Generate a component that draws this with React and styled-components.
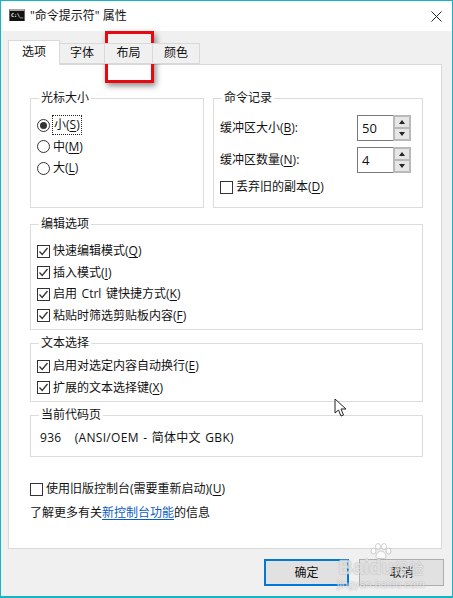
import React from 'react'
import styled, { createGlobalStyle } from 'styled-components'

const GlobalStyle = createGlobalStyle`
  html, body {
    margin: 0;
    padding: 0;
    background: #f0f0f0;
  }
  * {
    box-sizing: border-box;
  }
`

const Window = styled.div`
  position: relative;
  width: 453px;
  height: 598px;
  display: flex;
  flex-direction: column;
  overflow: hidden;
  border: 1px solid #17b5c4;
  border-bottom-width: 2px;
  background: #f0f0f0;
  color: #111;
  font-family: 'Open Sans', 'Noto Sans CJK SC', sans-serif;
  font-size: 12px;
  line-height: 16px;
`

const TitleBar = styled.div`
  flex: none;
  height: 30px;
  display: flex;
  align-items: center;
  padding: 0 10px 0 8px;
  background: #fff;
`

const TitleText = styled.span`
  flex: 1;
  margin-left: 5px;
`

const ConsoleIcon = styled.div`
  width: 16px;
  height: 12px;
  margin-bottom: 2px;
  padding-left: 1px;
  background: #111;
  border-top: 2px solid #a8a8a8;
  border-left: 1px solid #666;
  border-right: 1px solid #666;
  color: #fff;
  font-family: 'DejaVu Sans Mono', monospace;
  font-weight: 700;
  font-size: 5px;
  line-height: 9px;
  white-space: pre;
`

const Body = styled.div`
  flex: 1;
  display: flex;
  flex-direction: column;
  padding: 9px 10px 9px 7px;
`

const Tabs = styled.div`
  flex: none;
  height: 24px;
  display: flex;
  align-items: flex-end;
  position: relative;
  z-index: 1;
`

const Tab = styled.div`
  width: ${({ $w }) => $w}px;
  height: ${({ $active }) => ($active ? 25 : 21)}px;
  margin-bottom: ${({ $active }) => ($active ? -1 : 0)}px;
  padding-bottom: ${({ $active }) => ($active ? 3 : 1)}px;
  display: flex;
  align-items: center;
  justify-content: center;
  border: 1px solid #d9d9d9;
  border-left-width: ${({ $active, $first }) => ($active || $first ? 1 : 0)}px;
  border-bottom: ${({ $active }) => ($active ? 'none' : '1px solid #d9d9d9')};
  background: ${({ $active }) => ($active ? '#fff' : '#f0f0f0')};
`

const Panel = styled.div`
  flex: none;
  height: 485px;
  display: flex;
  flex-direction: column;
  padding: 33px 18px 0 21px;
  background: #fff;
  border: 1px solid #d9d9d9;
`

const TopRow = styled.div`
  display: flex;
  gap: 9px;
`

const Group = styled.div`
  flex: ${({ $w }) => ($w ? `0 0 ${$w}px` : 'none')};
  height: ${({ $h }) => $h}px;
  margin-top: ${({ $mt }) => $mt || 0}px;
  padding-left: 6px;
  border: 1px solid #dcdcdc;
`

const Legend = styled.div`
  width: fit-content;
  height: 16px;
  margin: -9px 0 0 2px;
  padding: 0 2px;
  background: #fff;
`

const Rows = styled.div`
  display: flex;
  flex-direction: column;
  gap: ${({ $gap }) => $gap}px;
  margin-top: ${({ $mt }) => $mt}px;
`

const Row = styled.div`
  height: 16px;
  margin-top: ${({ $mt }) => $mt || 0}px;
  display: flex;
  align-items: center;
  white-space: pre;
`

const Radio = styled.span`
  flex: none;
  width: 13px;
  height: 13px;
  margin-right: 3px;
  display: flex;
  align-items: center;
  justify-content: center;
  border: 1px solid #333;
  border-radius: 50%;

  &::after {
    content: '';
    width: 7px;
    height: 7px;
    border-radius: 50%;
    background: ${({ $on }) => ($on ? '#333' : 'transparent')};
  }
`

const Box = styled.span`
  flex: none;
  width: 13px;
  height: 13px;
  margin-right: 3px;
  display: flex;
  border: 1px solid #333;
  background: #fff;
`

const Focus = styled.span`
  padding: 1px;
  outline: 1px dotted #222;
  line-height: 16px;
`

const Key = styled.span`
  text-decoration: underline;
  text-underline-offset: 2px;
`

const Wide = styled.span`
  word-spacing: 1.5px;
`

const SpinRow = styled.div`
  height: 26px;
  display: flex;
  align-items: center;
  justify-content: space-between;
  padding-right: 11px;
`

const Spin = styled.div`
  width: 54px;
  height: 26px;
  display: flex;
`

const SpinInput = styled.div`
  flex: 1;
  padding: 0 4px;
  display: flex;
  align-items: center;
  font-size: 13px;
  border: 1px solid #7a7a7a;
  border-right: none;
`

const SpinButtons = styled.div`
  width: 18px;
  display: flex;
  flex-direction: column;
  gap: 2px;
  padding: 2px;
  background: #b9b9b9;
`

const SpinButton = styled.div`
  flex: 1;
  display: flex;
  align-items: center;
  justify-content: center;
  background: #e6e6e6;

  &::after {
    content: '';
    border-left: 3.5px solid transparent;
    border-right: 3.5px solid transparent;
    ${({ $up }) => ($up ? 'border-bottom' : 'border-top')}: 4px solid #222;
  }
`

const CodePage = styled.div`
  margin: 7px 0 0 3px;
  letter-spacing: 0.3px;
  word-spacing: 1px;
  white-space: pre;
`

const LegacyRow = styled.div`
  height: 16px;
  margin-top: 24px;
  display: flex;
  align-items: center;
`

const InfoLine = styled.div`
  margin-top: 8px;
`

const Link = styled.span`
  color: #0a5bc4;
  text-decoration: underline;
  text-underline-offset: 2px;
`

const Footer = styled.div`
  flex: 1;
  display: flex;
  justify-content: flex-end;
  gap: 10px;
  margin-right: -2px;
  padding-top: 10px;
`

const Button = styled.div`
  width: 85px;
  height: 27px;
  display: flex;
  align-items: center;
  justify-content: center;
  background: #e1e1e1;
  border: ${({ $primary }) => ($primary ? '2px solid #0078d7' : '1px solid #adadad')};
`

const Highlight = styled.div`
  position: absolute;
  left: 104px;
  top: 30px;
  width: 49px;
  height: 52px;
  border: 3px solid #e8080f;
  box-shadow: 2px 3px 6px rgba(0, 0, 0, 0.45);
`

const Cursor = styled.svg`
  position: absolute;
  left: 333px;
  top: 397px;
`

const Watermark = styled.div`
  position: absolute;
  left: 335px;
  top: 542px;
  width: 90px;
  display: flex;
  flex-direction: column;
  align-items: center;
  color: rgba(255, 255, 255, 0.5);
  text-shadow:
    1px 0 0 rgba(175, 175, 175, 0.3),
    -1px 0 0 rgba(175, 175, 175, 0.3),
    0 1px 0 rgba(175, 175, 175, 0.3),
    0 -1px 0 rgba(175, 175, 175, 0.3);
  font-family: 'Liberation Sans', 'Noto Sans CJK SC', sans-serif;
  pointer-events: none;
`

const WatermarkMain = styled.div`
  display: flex;
  align-items: baseline;
  margin-top: -2px;
  font-size: 20px;
  font-weight: 700;
  line-height: 19px;
`

const WatermarkCjk = styled.span`
  font-size: 15px;
  font-weight: 400;
`

const WatermarkSub = styled.span`
  font-size: 10.5px;
  line-height: 12px;
  letter-spacing: 0.2px;
`

const Check = () => (
  <svg width="11" height="11" viewBox="0 0 11 11">
    <path d="M1.5 5.5 L4.2 8.5 L9.5 2" fill="none" stroke="#333" strokeWidth="1.3" />
  </svg>
)

const CheckRow = ({ children }) => (
  <Row>
    <Box>
      <Check />
    </Box>
    {children}
  </Row>
)

const Spinner = ({ value }) => (
  <Spin>
    <SpinInput>{value}</SpinInput>
    <SpinButtons>
      <SpinButton $up />
      <SpinButton />
    </SpinButtons>
  </Spin>
)

const App = () => {
  return (
    <>
      <GlobalStyle />
      <Window>
        <TitleBar>
          <ConsoleIcon>{'C:\\_'}</ConsoleIcon>
          <TitleText>"命令提示符" 属性</TitleText>
          <svg width="11" height="11" viewBox="0 0 11 11">
            <path d="M0.5 0.5 L10.5 10.5 M10.5 0.5 L0.5 10.5" stroke="#222" strokeWidth="1" fill="none" />
          </svg>
        </TitleBar>
        <Body>
          <Tabs>
            <Tab $w={52} $active $first>选项</Tab>
            <Tab $w={45}>字体</Tab>
            <Tab $w={48}>布局</Tab>
            <Tab $w={47}>颜色</Tab>
          </Tabs>
          <Panel>
            <TopRow>
              <Group $w={174} $h={110}>
                <Legend>光标大小</Legend>
                <Rows $gap={5.5} $mt={11}>
                  <Row>
                    <Radio $on />
                    <Focus>小(<Key>S</Key>)</Focus>
                  </Row>
                  <Row>
                    <Radio />
                    中(<Key>M</Key>)
                  </Row>
                  <Row>
                    <Radio />
                    大(<Key>L</Key>)
                  </Row>
                </Rows>
              </Group>
              <Group $w={210} $h={110}>
                <Legend>命令记录</Legend>
                <Rows $gap={6} $mt={9}>
                  <SpinRow>
                    <span>缓冲区大小(<Key>B</Key>):</span>
                    <Spinner value="50" />
                  </SpinRow>
                  <SpinRow>
                    <span>缓冲区数量(<Key>N</Key>):</span>
                    <Spinner value="4" />
                  </SpinRow>
                </Rows>
                <Row $mt={6}>
                  <Box />
                  丢弃旧的副本(<Key>D</Key>)
                </Row>
              </Group>
            </TopRow>
            <Group $h={106} $mt={16}>
              <Legend>编辑选项</Legend>
              <Rows $gap={5.5} $mt={11}>
                <CheckRow>快速编辑模式(<Key>Q</Key>)</CheckRow>
                <CheckRow>插入模式(<Key>I</Key>)</CheckRow>
                <CheckRow><Wide>启用 Ctrl 键快捷方式</Wide>(<Key>K</Key>)</CheckRow>
                <CheckRow>粘贴时筛选剪贴板内容(<Key>F</Key>)</CheckRow>
              </Rows>
            </Group>
            <Group $h={59} $mt={13}>
              <Legend>文本选择</Legend>
              <Rows $gap={5.5} $mt={7}>
                <CheckRow>启用对选定内容自动换行(<Key>E</Key>)</CheckRow>
                <CheckRow>扩展的文本选择键(<Key>X</Key>)</CheckRow>
              </Rows>
            </Group>
            <Group $h={42} $mt={13}>
              <Legend>当前代码页</Legend>
              <CodePage>936   (ANSI/OEM - 简体中文 GBK)</CodePage>
            </Group>
            <LegacyRow>
              <Box />
              使用旧版控制台(需要重新启动)(<Key>U</Key>)
            </LegacyRow>
            <InfoLine>
              了解更多有关<Link>新控制台功能</Link>的信息
            </InfoLine>
          </Panel>
          <Footer>
            <Button $primary>确定</Button>
            <Button>取消</Button>
          </Footer>
        </Body>
        <Highlight />
        <Cursor width="13" height="20" viewBox="0 0 13 20">
          <path d="M1 1 L1 15 L4.5 12 L7 18 L9.5 17 L7 11 L12 11 Z" fill="#fff" stroke="#222" strokeWidth="1" />
        </Cursor>
        <Watermark>
          <svg width="22" height="17" viewBox="0 0 22 17" fill="rgba(255,255,255,0.7)" stroke="rgba(170,170,170,0.7)" strokeWidth="0.8">
            <ellipse cx="3.5" cy="8" rx="2.5" ry="3" />
            <ellipse cx="8" cy="3.5" rx="2.5" ry="3" />
            <ellipse cx="14" cy="3.5" rx="2.5" ry="3" />
            <ellipse cx="18.5" cy="8" rx="2.5" ry="3" />
            <path d="M11 8 C8 8 5.5 11.5 6 14 C6.5 16 9 15.5 11 15.5 C13 15.5 15.5 16 16 14 C16.5 11.5 14 8 11 8 Z" />
          </svg>
          <WatermarkMain>
            Baidu<WatermarkCjk>经验</WatermarkCjk>
          </WatermarkMain>
          <WatermarkSub>jingyan.baidu.com</WatermarkSub>
        </Watermark>
      </Window>
    </>
  )
}

export default App
